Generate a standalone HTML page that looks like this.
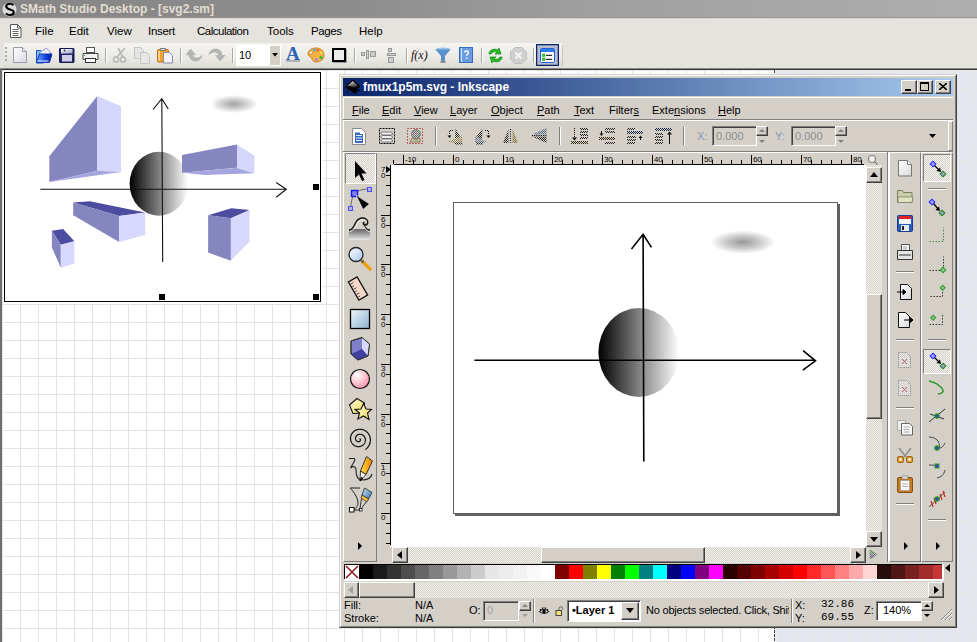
<!DOCTYPE html>
<html><head><meta charset="utf-8">
<style>
*{margin:0;padding:0;box-sizing:border-box}
html,body{width:977px;height:642px;overflow:hidden;background:#fff;font-family:"Liberation Sans",sans-serif;font-size:12px;color:#000}
.a{position:absolute}
.t{position:absolute;white-space:pre;line-height:1}
</style></head><body>
<!-- SMath title bar -->
<div class="a" style="left:0;top:0;width:977px;height:18px;background:linear-gradient(90deg,#868686 0%,#8c8c8c 35%,#a0a0a0 62%,#aeaeae 100%)"></div>
<div class="a" style="left:0;top:17px;width:977px;height:1px;background:#959595"></div>
<div class="t" style="left:20px;top:3px;font-size:12px;font-weight:bold;color:#e2ddd2">SMath Studio Desktop - [svg2.sm]</div>
<!-- menu bar -->
<div class="a" style="left:0;top:18px;width:977px;height:24px;background:#e5e3de"></div>
<div class="a" style="left:0;top:18px;width:977px;height:1px;background:#d8d4cc"></div>
<div class="t" style="left:35px;top:26px;font-size:11.5px">File</div>
<div class="t" style="left:69px;top:26px;font-size:11.5px">Edit</div>
<div class="t" style="left:107px;top:26px;font-size:11.5px">View</div>
<div class="t" style="left:148px;top:26px;font-size:11.5px;letter-spacing:-0.3px">Insert</div>
<div class="t" style="left:197px;top:26px;font-size:11.5px;letter-spacing:-0.5px">Calculation</div>
<div class="t" style="left:267px;top:26px;font-size:11.5px">Tools</div>
<div class="t" style="left:311px;top:26px;font-size:11.5px;letter-spacing:-0.4px">Pages</div>
<div class="t" style="left:359px;top:26px;font-size:11.5px">Help</div>
<!-- toolbar -->
<div class="a" style="left:0;top:42px;width:977px;height:27px;background:#e5e3de"></div>
<div class="a" style="left:4px;top:43px;width:559px;height:25px;border-radius:3px;background:linear-gradient(#f5f4f0,#ebe9e4 60%,#dddbd4)"></div>
<div class="a" style="left:0;top:68px;width:977px;height:1px;background:#858585"></div><div class="a" style="left:0;top:69px;width:977px;height:1px;background:#3c3c3c"></div>

<!-- S icon -->
<svg class="a" style="left:2px;top:1px" width="16" height="16" viewBox="0 0 16 16"><circle cx="7.5" cy="8.5" r="7" fill="#dcdcdc"/><path d="M11.5 4.2C10.6 3.2 9.3 2.8 7.8 2.8 5.6 2.8 4.2 4 4.2 5.6c0 3.6 7.6 2 7.6 5.6 0 1.7-1.6 2.8-3.9 2.8-1.7 0-3.1-.6-4-1.7" fill="none" stroke="#000" stroke-width="2.1"/></svg>
<!-- menu doc icon -->
<svg class="a" style="left:10px;top:24px" width="12" height="14" viewBox="0 0 12 14"><path d="M.5 .5h7l3.5 3.5v9.5h-10.5z" fill="#fff" stroke="#555"/><path d="M7.5 .5v3.5h3.5" fill="none" stroke="#555"/><path d="M2.5 5.5h6M2.5 7.5h6M2.5 9.5h6M2.5 11.5h6" stroke="#666"/></svg>
<!-- grip -->
<div class="a" style="left:5px;top:47px;width:2px;height:2px;background:#a8a8a8"></div>
<div class="a" style="left:5px;top:51px;width:2px;height:2px;background:#a8a8a8"></div>
<div class="a" style="left:5px;top:55px;width:2px;height:2px;background:#a8a8a8"></div>
<div class="a" style="left:5px;top:59px;width:2px;height:2px;background:#a8a8a8"></div>
<!-- new -->
<svg class="a" style="left:13px;top:47px" width="15" height="16" viewBox="0 0 15 16"><defs><linearGradient id="gpg" x1="0" y1="0" x2="1" y2="1"><stop offset="0" stop-color="#fff"/><stop offset="1" stop-color="#d8d8e4"/></linearGradient></defs><path d="M.5 .5h9l4 4v11h-13z" fill="url(#gpg)" stroke="#9a9aa4"/><path d="M9.5 .5v4h4" fill="#e8e8ee" stroke="#9a9aa4"/></svg>
<!-- open -->
<svg class="a" style="left:32px;top:45px" width="44" height="20" viewBox="32 45 44 20"><defs><linearGradient id="fdf" x1="0" y1="0" x2="1" y2="0"><stop offset="0" stop-color="#6aa8f8"/><stop offset=".6" stop-color="#1040d8"/><stop offset="1" stop-color="#001a90"/></linearGradient><linearGradient id="svf" x1="0" y1="0" x2="1" y2="1"><stop offset="0" stop-color="#fff"/><stop offset="1" stop-color="#9aa0c8"/></linearGradient></defs>
<path d="M36.5 50.5h4l1 1.5h2v11h-7z" fill="#7ac0f8" stroke="#1a50d0"/>
<path d="M39 53L46.5 48 51 53 44 57z" fill="#f0f0fa" stroke="#6070c8" stroke-width=".7"/>
<path d="M36.5 62.5L39.5 54H52L49.5 62.5z" fill="url(#fdf)" stroke="#0a30b8" stroke-width=".9"/>
<path d="M37.5 61h11" stroke="#e8f0ff" stroke-width="1"/>
<rect x="59.5" y="48.5" width="14.5" height="14" rx=".5" fill="#24286a" stroke="#14184a"/>
<rect x="61" y="49" width="11.5" height="4.5" fill="url(#svf)"/>
<circle cx="64.5" cy="50.5" r=".9" fill="#24286a"/>
<rect x="62" y="55" width="10" height="6.5" fill="#cfcfe6"/>
</svg>
<!-- print -->
<svg class="a" style="left:82px;top:47px" width="17" height="16" viewBox="0 0 17 16"><rect x="4.5" y=".5" width="8" height="5" fill="#fff" stroke="#555"/><path d="M1 6.5h15v6h-15z" fill="#f0f0f0" stroke="#444"/><rect x="3.5" y="11.5" width="10" height="4" fill="#fff" stroke="#333"/><rect x="2" y="8" width="1" height="1" fill="#2a2"/></svg>
<!-- seps -->
<div class="a" style="left:105px;top:48px;width:1px;height:15px;background:#a8a8a0;box-shadow:1px 0 #fff"></div>
<div class="a" style="left:180px;top:48px;width:1px;height:15px;background:#a8a8a0;box-shadow:1px 0 #fff"></div>
<div class="a" style="left:232px;top:48px;width:1px;height:15px;background:#a8a8a0;box-shadow:1px 0 #fff"></div>
<div class="a" style="left:354px;top:48px;width:1px;height:15px;background:#a8a8a0;box-shadow:1px 0 #fff"></div>
<div class="a" style="left:406px;top:48px;width:1px;height:15px;background:#a8a8a0;box-shadow:1px 0 #fff"></div>
<div class="a" style="left:481px;top:48px;width:1px;height:15px;background:#a8a8a0;box-shadow:1px 0 #fff"></div>
<div class="a" style="left:533px;top:48px;width:1px;height:15px;background:#a8a8a0;box-shadow:1px 0 #fff"></div>
<!-- cut -->
<svg class="a" style="left:112px;top:47px" width="15" height="16" viewBox="0 0 15 16"><path d="M13 1L5 10M6 1l5 9" stroke="#b8b8b8" stroke-width="1.6" fill="none"/><circle cx="4" cy="12.5" r="2.6" fill="none" stroke="#b4b4b4" stroke-width="1.5"/><circle cx="11" cy="12.5" r="2.6" fill="none" stroke="#b4b4b4" stroke-width="1.5"/></svg>
<!-- copy -->
<svg class="a" style="left:134px;top:47px" width="17" height="17" viewBox="0 0 17 17"><path d="M.5 .5h6l3 3v8h-9z" fill="#e6e6e6" stroke="#c4c4c4"/><path d="M6.5 5.5h6l3 3v8h-9z" fill="#e6e6e6" stroke="#c4c4c4"/></svg>
<!-- paste -->
<svg class="a" style="left:157px;top:47px" width="17" height="17" viewBox="0 0 17 17"><rect x=".5" y="2.5" width="11" height="12.5" rx="1" fill="#f0a020" stroke="#c06a10"/><rect x="1.5" y="4" width="1" height="10" fill="#fff"/><path d="M3.5 3.5v-2h5v2z" fill="#ddd" stroke="#777"/><path d="M6.5 5.5h6l3 3v7.5h-9z" fill="#f4f4fc" stroke="#8888a8"/></svg>
<!-- undo -->
<svg class="a" style="left:182px;top:44px" width="48" height="22" viewBox="182 44 48 22"><path d="M190.6 48.9L186 54.8H189C189 58 191.5 61 195.5 61 199 61 201.5 58.5 202 55.5 200.5 57.5 198.5 58 196.5 58 194 58 192.5 56.5 192.5 54.8H195.4Z" fill="#b4b4b4" stroke="#a4a4a4" stroke-width=".5"/><path d="M209 54.5C209.5 51 212.5 49 216 49 219.5 49 222 51.5 222 55.5H225L220 61 215.5 55.5H218.5C218.5 53.5 217 52 215 52 212.5 52 210.5 53 209 54.5Z" fill="#b4b4b4" stroke="#a4a4a4" stroke-width=".5"/></svg>
<!-- combobox -->
<div class="a" style="left:236px;top:45px;width:45px;height:21px;background:#fff"></div>
<div class="a" style="left:270px;top:46px;width:10px;height:19px;background:#d4d0c8"></div>
<svg class="a" style="left:272px;top:53px" width="6" height="4"><path d="M0 0h6l-3 3.5z" fill="#000"/></svg>
<div class="t" style="left:239px;top:50px;font-size:11px;color:#000">10</div>
<!-- A -->
<div class="t" style="left:286px;top:44px;font-family:'Liberation Serif',serif;font-size:19px;font-weight:bold;color:#2a62b8">A</div>
<div class="a" style="left:286px;top:60px;width:14px;height:2px;background:#b0b0b0"></div>
<!-- palette -->
<svg class="a" style="left:307px;top:47px" width="18" height="16" viewBox="0 0 18 16"><path d="M9 1C4 1 1 4 1 7c0 2 2 2 3 3s1 5 5 5c5 0 8-3 8-7S14 1 9 1z" fill="#f4b040" stroke="#d08020"/><circle cx="4" cy="5.5" r="1.5" fill="#fff" stroke="#c07020" stroke-width=".6"/><circle cx="7.5" cy="3" r="1.3" fill="#40a0f0"/><circle cx="11" cy="3.2" r="1.3" fill="#f06030"/><circle cx="14" cy="6" r="1.3" fill="#f0e040"/><circle cx="14" cy="10.5" r="1.6" fill="#30c030"/><circle cx="9.5" cy="12.5" r="1.5" fill="#b080e0"/></svg>
<!-- box -->
<div class="a" style="left:332px;top:48px;width:14px;height:14px;border:2px solid #000;background:#ececec;box-shadow:1px 1px 0 #a0a0a0"></div>
<!-- align -->
<svg class="a" style="left:361px;top:50px" width="15" height="9" viewBox="0 0 15 9"><rect x=".5" y="2.5" width="3" height="3" fill="#ccc" stroke="#999"/><rect x="5.5" y=".5" width="2" height="8" fill="#ccc" stroke="#999"/><rect x="9.5" y="1.5" width="5" height="5" fill="#ccc" stroke="#999"/></svg>
<svg class="a" style="left:387px;top:48px" width="9" height="15" viewBox="0 0 9 15"><rect x="1.5" y=".5" width="3" height="3" fill="#ccc" stroke="#999"/><rect x=".5" y="5.5" width="8" height="2" fill="#ccc" stroke="#999"/><rect x="1.5" y="9.5" width="5" height="5" fill="#ccc" stroke="#999"/></svg>
<!-- f(x) -->
<div class="t" style="left:411px;top:49px;font-family:'Liberation Serif',serif;font-style:italic;font-size:12px;color:#111">f(x)</div>
<!-- funnel -->
<svg class="a" style="left:435px;top:47px" width="17" height="16" viewBox="0 0 17 16"><ellipse cx="8" cy="2.5" rx="7.5" ry="2" fill="#9ac0ec"/><path d="M.5 2.5h15L10 9v5.5H6V9z" fill="#5a90d0"/><ellipse cx="8" cy="15" rx="3" ry="1" fill="#888"/></svg>
<!-- help -->
<svg class="a" style="left:459px;top:47px" width="14" height="16" viewBox="0 0 14 16"><rect x=".5" y=".5" width="13" height="15" fill="#6a9ce0" stroke="#3a6ac0"/><path d="M2.5 1v14" stroke="#d8e8ff"/><path d="M5.5 5.5c0-2 4-2 4 0 0 1.5-2 1.5-2 3.5" fill="none" stroke="#fff" stroke-width="1.3"/><rect x="7" y="10.5" width="1.4" height="1.4" fill="#fff"/></svg>
<!-- refresh -->
<svg class="a" style="left:487px;top:47px" width="17" height="17" viewBox="0 0 17 17"><path d="M2 7c0-4 5-6 9-4l1-2 2 6-6 0 2-2c-3-1-5 0-6 2z" fill="#22bb22" stroke="#118811" stroke-width=".7"/><path d="M15 10c0 4-5 6-9 4l-1 2-2-6 6 0-2 2c3 1 5 0 6-2z" fill="#22bb22" stroke="#118811" stroke-width=".7"/></svg>
<!-- stop -->
<svg class="a" style="left:510px;top:47px" width="17" height="17" viewBox="0 0 17 17"><path d="M5 .5h7l4.5 4.5v7L12 16.5H5L.5 12V5z" fill="#cfcfcf" stroke="#bdbdbd"/><path d="M5.5 5.5l6 6M11.5 5.5l-6 6" stroke="#f4f4f4" stroke-width="2.2"/></svg>
<!-- selected button -->
<div class="a" style="left:536px;top:44px;width:23px;height:22px;border:1px solid #0a246a;background:#b6bdd2;box-shadow:inset 0 0 0 1px #8890b0"></div>
<svg class="a" style="left:540px;top:48px" width="15" height="15" viewBox="0 0 15 15"><rect x=".5" y=".5" width="14" height="14" rx="1" fill="#fff" stroke="#2060d0"/><rect x="1" y="1" width="13" height="3" fill="#2a7ae8"/><rect x="2.5" y="6" width="2.5" height="2.5" fill="#3c3" stroke="#191" stroke-width=".5"/><rect x="2.5" y="10" width="2.5" height="2.5" fill="#3c3" stroke="#191" stroke-width=".5"/><path d="M6 7.3h6M6 11.3h6" stroke="#333" stroke-width="1.2"/></svg>
<div class="a" style="left:562px;top:45px;width:1px;height:21px;background:#c8c6c0"></div>

<!-- grid area -->
<div class="a" style="left:0;top:70px;width:977px;height:572px;background-color:#fff;background-image:linear-gradient(90deg,#e3e3e3 1px,transparent 1px),linear-gradient(#e3e3e3 1px,transparent 1px);background-size:18px 18px;background-position:2px 0"></div>
<div class="a" style="left:775px;top:70px;width:202px;height:572px;background-color:#e4e7f0;background-image:linear-gradient(90deg,#e8e7e6 1px,transparent 1px),linear-gradient(#e8e7e6 1px,transparent 1px);background-size:18px 18px;background-position:-773px 0"></div>
<div class="a" style="left:0;top:69px;width:2px;height:573px;background:#6e6e6e"></div>
<div class="a" style="left:774px;top:70px;width:1px;height:572px;background-image:linear-gradient(#404040 3px,transparent 3px);background-size:1px 4px;background-position:0 0"></div>
<div class="a" style="left:775px;top:70px;width:2px;height:572px;background:#ebebeb"></div>
<!-- svg box -->
<div class="a" style="left:3px;top:71px;width:320px;height:233px;background:#fff"></div>
<div class="a" style="left:4px;top:72px;width:317px;height:230px;border:1px solid #000;background:#fff"></div>

<svg class="a" style="left:0;top:0" width="330" height="310" viewBox="0 0 330 310">
<defs>
<linearGradient id="sph1" x1="0" y1="0" x2="1" y2="0"><stop offset="0" stop-color="#000"/><stop offset="1" stop-color="#fff"/></linearGradient>
<radialGradient id="blur1"><stop offset="0" stop-color="#a2a2a2"/><stop offset=".5" stop-color="#cecece"/><stop offset="1" stop-color="#fff"/></radialGradient>
</defs>
<ellipse cx="234" cy="104" rx="24" ry="9" fill="url(#blur1)"/>
<ellipse cx="158.9" cy="183.7" rx="29.3" ry="32" fill="url(#sph1)"/>
<polygon points="49.3,156.3 97.3,95.9 97.3,170.7 49.3,181.9" fill="#8585c0"/>
<polygon points="97.3,95.9 121,106.2 121,172.1 97.3,170.7" fill="#d6d6fc"/>
<polygon points="49.3,181.9 97.3,170.7 121,172.1" fill="#a6a6de"/>
<polygon points="182,154.9 237,144.4 237,167.8 182,172.7" fill="#8585c0"/>
<polygon points="182,172.7 237,167.8 254.4,173.3 204.7,175.1" fill="#a6a6de"/>
<polygon points="237,144.4 254.4,155.8 254.4,173.3 237,167.8" fill="#d6d6fc"/>
<polygon points="73.2,202.6 89.8,201.2 145.2,212.4 119.2,215.9" fill="#4c4ca0"/>
<polygon points="73.2,202.6 119.2,215.9 119.2,241.9 73.2,215.2" fill="#8585c0"/>
<polygon points="119.2,215.9 145.2,212.4 145.2,234.9 119.2,241.9" fill="#d8d8fc"/>
<polygon points="51.9,230.7 63.1,229 74.4,241.2 60.8,244.7" fill="#4c4ca0"/>
<polygon points="51.9,230.7 60.8,244.7 60.8,267.8 51.9,247.5" fill="#8585c0"/>
<polygon points="60.8,244.7 74.4,241.2 74.4,263.6 60.8,267.8" fill="#d8d8fc"/>
<polygon points="208.1,215.2 231.4,208.3 249.6,210.1 230.9,218.2" fill="#4c4ca0"/>
<polygon points="208.1,215.2 230.9,218.2 230.9,260.7 208.1,252.6" fill="#8585c0"/>
<polygon points="230.9,218.2 249.6,210.1 249.6,241.5 230.9,260.7" fill="#d8d8fc"/>
<path d="M40.3 189.3H286.3M276.2 182.5L286.3 189.3 276.2 197.2" fill="none" stroke="#111" stroke-width="1.1"/>
<path d="M161.8 98.7L162.7 262M153 109.5L161.8 98.7 168.3 109" fill="none" stroke="#111" stroke-width="1.1"/>
<rect x="313" y="184" width="6" height="6" fill="#000"/>
<rect x="159" y="294" width="6" height="6" fill="#000"/>
<rect x="313" y="294" width="6" height="6" fill="#000"/>
</svg>

<!-- Inkscape window -->
<div class="a" style="left:339px;top:74px;width:618px;height:554px;background:#d4d0c8;border-top:1px solid #d4d0c8;border-left:1px solid #d4d0c8;border-right:1px solid #404040;border-bottom:1px solid #404040"></div>
<div class="a" style="left:340px;top:75px;width:616px;height:552px;border-top:1px solid #fff;border-left:1px solid #fff;border-right:1px solid #808080;border-bottom:1px solid #808080"></div>
<div class="a" style="left:343px;top:78px;width:610px;height:18px;background:linear-gradient(90deg,#0a246a,#a6caf0)"></div>
<svg class="a" style="left:344px;top:78px" width="18" height="18" viewBox="344 78 18 18"><defs><linearGradient id="inkg" x1="0" y1="0" x2=".6" y2="1"><stop offset="0" stop-color="#fff"/><stop offset="1" stop-color="#222"/></linearGradient></defs><path d="M352.7 79.5L360.3 86.5 357 89 358 91 355 94 352.5 92 350 90.5 348 89.5 345.3 86.5z" fill="#000"/><path d="M352.7 81L358.5 86.2 354 87.5 350 86 347 86.2z" fill="url(#inkg)"/><rect x="347" y="92" width="1.5" height="1" fill="#000"/><rect x="358.5" y="90" width="1.5" height="1" fill="#000"/></svg>
<div class="t" style="left:363px;top:81px;font-size:12px;font-weight:bold;color:#fff">fmux1p5m.svg - Inkscape</div>
<div class="a" style="left:901px;top:80px;width:16px;height:14px;background:#d4d0c8;border-top:1px solid #fff;border-left:1px solid #fff;border-right:1px solid #404040;border-bottom:1px solid #404040;box-shadow:inset -1px -1px #808080"></div>
<div class="a" style="left:917px;top:80px;width:16px;height:14px;background:#d4d0c8;border-top:1px solid #fff;border-left:1px solid #fff;border-right:1px solid #404040;border-bottom:1px solid #404040;box-shadow:inset -1px -1px #808080"></div>
<div class="a" style="left:935px;top:80px;width:16px;height:14px;background:#d4d0c8;border-top:1px solid #fff;border-left:1px solid #fff;border-right:1px solid #404040;border-bottom:1px solid #404040;box-shadow:inset -1px -1px #808080"></div>
<div class="a" style="left:905px;top:89px;width:6px;height:2px;background:#000"></div>
<div class="a" style="left:920px;top:82px;width:9px;height:9px;border:1px solid #000;border-top-width:2px"></div>
<svg class="a" style="left:939px;top:83px" width="8" height="7" viewBox="0 0 8 7"><path d="M0 0L8 7M8 0L0 7" stroke="#000" stroke-width="1.6"/></svg>
<div class="t" style="left:352px;top:105px;font-size:11px;text-underline-offset:1px"><u>F</u>ile</div>
<div class="t" style="left:382px;top:105px;font-size:11px;text-underline-offset:1px"><u>E</u>dit</div>
<div class="t" style="left:414px;top:105px;font-size:11px;text-underline-offset:1px"><u>V</u>iew</div>
<div class="t" style="left:450px;top:105px;font-size:11px;text-underline-offset:1px"><u>L</u>ayer</div>
<div class="t" style="left:491px;top:105px;font-size:11px;text-underline-offset:1px"><u>O</u>bject</div>
<div class="t" style="left:537px;top:105px;font-size:11px;text-underline-offset:1px"><u>P</u>ath</div>
<div class="t" style="left:574px;top:105px;font-size:11px;text-underline-offset:1px"><u>T</u>ext</div>
<div class="t" style="left:609px;top:105px;font-size:11px;text-underline-offset:1px">Filter<u>s</u></div>
<div class="t" style="left:652px;top:105px;font-size:11px;text-underline-offset:1px">Exte<u>n</u>sions</div>
<div class="t" style="left:718px;top:105px;font-size:11px;text-underline-offset:1px"><u>H</u>elp</div>
<div class="a" style="left:343px;top:97px;width:610px;height:22px;border-left:1px solid #fff;border-top:1px solid #fff"></div>
<div class="a" style="left:343px;top:119px;width:610px;height:1px;background:#808080"></div>
<div class="a" style="left:343px;top:120px;width:610px;height:1px;background:#fff"></div>
<div class="a" style="left:343px;top:151px;width:610px;height:1px;background:#808080"></div>
<div class="a" style="left:343px;top:152px;width:610px;height:1px;background:#fff"></div>
<div class="a" style="left:343px;top:120px;width:1px;height:31px;background:#fff"></div>
<div class="a" style="left:435px;top:127px;width:1px;height:18px;background:#808080;box-shadow:1px 0 #fff"></div>
<div class="a" style="left:559px;top:127px;width:1px;height:18px;background:#808080;box-shadow:1px 0 #fff"></div>
<div class="a" style="left:683px;top:127px;width:1px;height:18px;background:#808080;box-shadow:1px 0 #fff"></div>
<div class="t" style="left:697px;top:131px;font-size:11px;color:#8594b8">X:</div>
<div class="a" style="left:712px;top:126px;width:45px;height:20px;background:#d4d0c8;border-top:1px solid #808080;border-left:1px solid #808080;border-right:1px solid #fff;border-bottom:1px solid #fff;box-shadow:inset 1px 1px #404040"></div>
<div class="t" style="left:716px;top:131px;font-size:11px;color:#8c8c8c">0.000</div>
<div class="a" style="left:756px;top:126px;width:12px;height:10px;background:#d4d0c8;border-top:1px solid #fff;border-left:1px solid #fff;border-right:1px solid #404040;border-bottom:1px solid #404040;box-shadow:inset -1px -1px #808080"></div>
<svg class="a" style="left:759px;top:129px" width="6" height="4"><path d="M0 3h6L3 0z" fill="#808080"/></svg><svg class="a" style="left:759px;top:140px" width="6" height="4"><path d="M0 0h6L3 3z" fill="#808080"/></svg>
<div class="t" style="left:775px;top:131px;font-size:11px;color:#8594b8">Y:</div>
<div class="a" style="left:791px;top:126px;width:45px;height:20px;background:#d4d0c8;border-top:1px solid #808080;border-left:1px solid #808080;border-right:1px solid #fff;border-bottom:1px solid #fff;box-shadow:inset 1px 1px #404040"></div>
<div class="t" style="left:795px;top:131px;font-size:11px;color:#8c8c8c">0.000</div>
<div class="a" style="left:835px;top:126px;width:12px;height:10px;background:#d4d0c8;border-top:1px solid #fff;border-left:1px solid #fff;border-right:1px solid #404040;border-bottom:1px solid #404040;box-shadow:inset -1px -1px #808080"></div>
<svg class="a" style="left:838px;top:129px" width="6" height="4"><path d="M0 3h6L3 0z" fill="#808080"/></svg><svg class="a" style="left:838px;top:140px" width="6" height="4"><path d="M0 0h6L3 3z" fill="#808080"/></svg>
<svg class="a" style="left:929px;top:134px" width="8" height="4"><path d="M0 0h7l-3.5 4z" fill="#000"/></svg>
<div class="a" style="left:948px;top:121px;width:5px;height:30px;border-left:1px solid #fff;border-top:1px solid #fff;border-right:1px solid #808080;border-bottom:1px solid #808080"></div>
<div class="a" style="left:343px;top:153px;width:34px;height:409px;border-left:1px solid #fff;border-bottom:1px solid #808080"></div>
<div class="a" style="left:376px;top:153px;width:1px;height:409px;background:#808080"></div>
<div class="a" style="left:345px;top:153px;width:31px;height:31px;background-color:#f4f3f0;background-image:linear-gradient(45deg,#d4d0c8 25%,transparent 25%,transparent 75%,#d4d0c8 75%),linear-gradient(45deg,#d4d0c8 25%,transparent 25%,transparent 75%,#d4d0c8 75%);background-size:2px 2px;background-position:0 0,1px 1px;border-top:1px solid #808080;border-left:1px solid #808080;border-right:1px solid #fff;border-bottom:1px solid #fff"></div>
<div class="a" style="left:377px;top:153px;width:510px;height:12px;background:#d4d0c8"></div>
<div class="a" style="left:394px;top:164px;width:470px;height:1px;background:#000"></div>
<div class="a" style="left:390px;top:165px;width:1px;height:380px;background:#000"></div>
<div class="a" style="left:393px;top:160px;width:1px;height:4px;background:#000"></div>
<div class="a" style="left:403px;top:155px;width:1px;height:9px;background:#000"></div>
<div class="a" style="left:413px;top:160px;width:1px;height:4px;background:#000"></div>
<div class="a" style="left:423px;top:160px;width:1px;height:4px;background:#000"></div>
<div class="a" style="left:433px;top:160px;width:1px;height:4px;background:#000"></div>
<div class="a" style="left:443px;top:160px;width:1px;height:4px;background:#000"></div>
<div class="a" style="left:453px;top:155px;width:1px;height:9px;background:#000"></div>
<div class="a" style="left:463px;top:160px;width:1px;height:4px;background:#000"></div>
<div class="a" style="left:473px;top:160px;width:1px;height:4px;background:#000"></div>
<div class="a" style="left:483px;top:160px;width:1px;height:4px;background:#000"></div>
<div class="a" style="left:493px;top:160px;width:1px;height:4px;background:#000"></div>
<div class="a" style="left:503px;top:155px;width:1px;height:9px;background:#000"></div>
<div class="a" style="left:513px;top:160px;width:1px;height:4px;background:#000"></div>
<div class="a" style="left:523px;top:160px;width:1px;height:4px;background:#000"></div>
<div class="a" style="left:533px;top:160px;width:1px;height:4px;background:#000"></div>
<div class="a" style="left:543px;top:160px;width:1px;height:4px;background:#000"></div>
<div class="a" style="left:552px;top:155px;width:1px;height:9px;background:#000"></div>
<div class="a" style="left:562px;top:160px;width:1px;height:4px;background:#000"></div>
<div class="a" style="left:572px;top:160px;width:1px;height:4px;background:#000"></div>
<div class="a" style="left:582px;top:160px;width:1px;height:4px;background:#000"></div>
<div class="a" style="left:592px;top:160px;width:1px;height:4px;background:#000"></div>
<div class="a" style="left:602px;top:155px;width:1px;height:9px;background:#000"></div>
<div class="a" style="left:612px;top:160px;width:1px;height:4px;background:#000"></div>
<div class="a" style="left:622px;top:160px;width:1px;height:4px;background:#000"></div>
<div class="a" style="left:632px;top:160px;width:1px;height:4px;background:#000"></div>
<div class="a" style="left:642px;top:160px;width:1px;height:4px;background:#000"></div>
<div class="a" style="left:652px;top:155px;width:1px;height:9px;background:#000"></div>
<div class="a" style="left:662px;top:160px;width:1px;height:4px;background:#000"></div>
<div class="a" style="left:672px;top:160px;width:1px;height:4px;background:#000"></div>
<div class="a" style="left:682px;top:160px;width:1px;height:4px;background:#000"></div>
<div class="a" style="left:692px;top:160px;width:1px;height:4px;background:#000"></div>
<div class="a" style="left:702px;top:155px;width:1px;height:9px;background:#000"></div>
<div class="a" style="left:712px;top:160px;width:1px;height:4px;background:#000"></div>
<div class="a" style="left:721px;top:160px;width:1px;height:4px;background:#000"></div>
<div class="a" style="left:731px;top:160px;width:1px;height:4px;background:#000"></div>
<div class="a" style="left:741px;top:160px;width:1px;height:4px;background:#000"></div>
<div class="a" style="left:751px;top:155px;width:1px;height:9px;background:#000"></div>
<div class="a" style="left:761px;top:160px;width:1px;height:4px;background:#000"></div>
<div class="a" style="left:771px;top:160px;width:1px;height:4px;background:#000"></div>
<div class="a" style="left:781px;top:160px;width:1px;height:4px;background:#000"></div>
<div class="a" style="left:791px;top:160px;width:1px;height:4px;background:#000"></div>
<div class="a" style="left:801px;top:155px;width:1px;height:9px;background:#000"></div>
<div class="a" style="left:811px;top:160px;width:1px;height:4px;background:#000"></div>
<div class="a" style="left:821px;top:160px;width:1px;height:4px;background:#000"></div>
<div class="a" style="left:831px;top:160px;width:1px;height:4px;background:#000"></div>
<div class="a" style="left:841px;top:160px;width:1px;height:4px;background:#000"></div>
<div class="a" style="left:851px;top:155px;width:1px;height:9px;background:#000"></div>
<div class="a" style="left:861px;top:160px;width:1px;height:4px;background:#000"></div>
<div class="t" style="left:405px;top:156px;font-size:8px;color:#000;letter-spacing:-0.2px">-10</div>
<div class="t" style="left:455px;top:156px;font-size:8px;color:#000;letter-spacing:-0.2px">0</div>
<div class="t" style="left:505px;top:156px;font-size:8px;color:#000;letter-spacing:-0.2px">10</div>
<div class="t" style="left:554px;top:156px;font-size:8px;color:#000;letter-spacing:-0.2px">20</div>
<div class="t" style="left:604px;top:156px;font-size:8px;color:#000;letter-spacing:-0.2px">30</div>
<div class="t" style="left:654px;top:156px;font-size:8px;color:#000;letter-spacing:-0.2px">40</div>
<div class="t" style="left:704px;top:156px;font-size:8px;color:#000;letter-spacing:-0.2px">50</div>
<div class="t" style="left:753px;top:156px;font-size:8px;color:#000;letter-spacing:-0.2px">60</div>
<div class="t" style="left:803px;top:156px;font-size:8px;color:#000;letter-spacing:-0.2px">70</div>
<div class="t" style="left:853px;top:156px;font-size:8px;color:#000;letter-spacing:-0.2px">80</div>
<div class="a" style="left:386px;top:175px;width:4px;height:1px;background:#000"></div>
<div class="a" style="left:386px;top:185px;width:4px;height:1px;background:#000"></div>
<div class="a" style="left:386px;top:195px;width:4px;height:1px;background:#000"></div>
<div class="a" style="left:386px;top:205px;width:4px;height:1px;background:#000"></div>
<div class="a" style="left:381px;top:215px;width:9px;height:1px;background:#000"></div>
<div class="a" style="left:386px;top:225px;width:4px;height:1px;background:#000"></div>
<div class="a" style="left:386px;top:235px;width:4px;height:1px;background:#000"></div>
<div class="a" style="left:386px;top:245px;width:4px;height:1px;background:#000"></div>
<div class="a" style="left:386px;top:255px;width:4px;height:1px;background:#000"></div>
<div class="a" style="left:381px;top:264px;width:9px;height:1px;background:#000"></div>
<div class="a" style="left:386px;top:274px;width:4px;height:1px;background:#000"></div>
<div class="a" style="left:386px;top:284px;width:4px;height:1px;background:#000"></div>
<div class="a" style="left:386px;top:294px;width:4px;height:1px;background:#000"></div>
<div class="a" style="left:386px;top:304px;width:4px;height:1px;background:#000"></div>
<div class="a" style="left:381px;top:314px;width:9px;height:1px;background:#000"></div>
<div class="a" style="left:386px;top:324px;width:4px;height:1px;background:#000"></div>
<div class="a" style="left:386px;top:334px;width:4px;height:1px;background:#000"></div>
<div class="a" style="left:386px;top:344px;width:4px;height:1px;background:#000"></div>
<div class="a" style="left:386px;top:354px;width:4px;height:1px;background:#000"></div>
<div class="a" style="left:381px;top:364px;width:9px;height:1px;background:#000"></div>
<div class="a" style="left:386px;top:374px;width:4px;height:1px;background:#000"></div>
<div class="a" style="left:386px;top:384px;width:4px;height:1px;background:#000"></div>
<div class="a" style="left:386px;top:394px;width:4px;height:1px;background:#000"></div>
<div class="a" style="left:386px;top:404px;width:4px;height:1px;background:#000"></div>
<div class="a" style="left:381px;top:414px;width:9px;height:1px;background:#000"></div>
<div class="a" style="left:386px;top:424px;width:4px;height:1px;background:#000"></div>
<div class="a" style="left:386px;top:433px;width:4px;height:1px;background:#000"></div>
<div class="a" style="left:386px;top:443px;width:4px;height:1px;background:#000"></div>
<div class="a" style="left:386px;top:453px;width:4px;height:1px;background:#000"></div>
<div class="a" style="left:381px;top:463px;width:9px;height:1px;background:#000"></div>
<div class="a" style="left:386px;top:473px;width:4px;height:1px;background:#000"></div>
<div class="a" style="left:386px;top:483px;width:4px;height:1px;background:#000"></div>
<div class="a" style="left:386px;top:493px;width:4px;height:1px;background:#000"></div>
<div class="a" style="left:386px;top:503px;width:4px;height:1px;background:#000"></div>
<div class="a" style="left:381px;top:513px;width:9px;height:1px;background:#000"></div>
<div class="a" style="left:386px;top:523px;width:4px;height:1px;background:#000"></div>
<div class="a" style="left:386px;top:533px;width:4px;height:1px;background:#000"></div>
<div class="a" style="left:386px;top:543px;width:4px;height:1px;background:#000"></div>
<div class="t" style="left:381px;top:167px;font-size:8px;line-height:6px">7</div>
<div class="t" style="left:381px;top:173px;font-size:8px;line-height:6px">0</div>
<div class="t" style="left:381px;top:217px;font-size:8px;line-height:6px">6</div>
<div class="t" style="left:381px;top:223px;font-size:8px;line-height:6px">0</div>
<div class="t" style="left:381px;top:266px;font-size:8px;line-height:6px">5</div>
<div class="t" style="left:381px;top:272px;font-size:8px;line-height:6px">0</div>
<div class="t" style="left:381px;top:316px;font-size:8px;line-height:6px">4</div>
<div class="t" style="left:381px;top:322px;font-size:8px;line-height:6px">0</div>
<div class="t" style="left:381px;top:366px;font-size:8px;line-height:6px">3</div>
<div class="t" style="left:381px;top:372px;font-size:8px;line-height:6px">0</div>
<div class="t" style="left:381px;top:416px;font-size:8px;line-height:6px">2</div>
<div class="t" style="left:381px;top:422px;font-size:8px;line-height:6px">0</div>
<div class="t" style="left:381px;top:465px;font-size:8px;line-height:6px">1</div>
<div class="t" style="left:381px;top:471px;font-size:8px;line-height:6px">0</div>
<div class="t" style="left:381px;top:515px;font-size:8px;line-height:6px">0</div>
<svg class="a" style="left:386px;top:166px" width="5" height="7"><path d="M0 0L5 3.5 0 7z" fill="#000"/></svg>
<div class="a" style="left:391px;top:165px;width:475px;height:382px;background:#fff"></div>
<svg class="a" style="left:391px;top:165px" width="475" height="382" viewBox="391 165 475 382">
<defs>
<linearGradient id="sph2" x1="0" y1="0" x2="1" y2="0"><stop offset="0" stop-color="#000"/><stop offset="1" stop-color="#fff"/></linearGradient>
<radialGradient id="blur2"><stop offset="0" stop-color="#999"/><stop offset=".5" stop-color="#c8c8c8"/><stop offset="1" stop-color="#fff"/></radialGradient>
</defs>
<rect x="455" y="204" width="385" height="312" fill="#606060"/>
<rect x="453.5" y="202.5" width="384" height="311" fill="#fff" stroke="#606060" stroke-width="1"/>
<ellipse cx="742.9" cy="242.2" rx="32.6" ry="11.8" fill="url(#blur2)"/>
<ellipse cx="638.8" cy="352.5" rx="40.4" ry="44.5" fill="url(#sph2)"/>
<path d="M474.4 360.2H815M803.1 350.6L815.5 360.8 802.8 370.2" fill="none" stroke="#000" stroke-width="1.6"/>
<path d="M643.1 235L643.8 461.4M631.5 249L643.1 234.3 651.5 247.4" fill="none" stroke="#000" stroke-width="1.6"/>
</svg>
<div class="a" style="left:866px;top:165px;width:16px;height:382px;background-color:#f4f3f0;background-image:linear-gradient(45deg,#d4d0c8 25%,transparent 25%,transparent 75%,#d4d0c8 75%),linear-gradient(45deg,#d4d0c8 25%,transparent 25%,transparent 75%,#d4d0c8 75%);background-size:2px 2px;background-position:0 0,1px 1px"></div>
<div class="a" style="left:866px;top:167px;width:16px;height:16px;background:#d4d0c8;border-top:1px solid #fff;border-left:1px solid #fff;border-right:1px solid #404040;border-bottom:1px solid #404040;box-shadow:inset -1px -1px #808080"></div>
<svg class="a" style="left:870px;top:172px" width="8" height="5"><path d="M0 5h8L4 0z" fill="#000"/></svg>
<div class="a" style="left:866px;top:294px;width:16px;height:125px;background:#d4d0c8;border-top:1px solid #fff;border-left:1px solid #fff;border-right:1px solid #404040;border-bottom:1px solid #404040;box-shadow:inset -1px -1px #808080"></div>
<div class="a" style="left:866px;top:531px;width:16px;height:16px;background:#d4d0c8;border-top:1px solid #fff;border-left:1px solid #fff;border-right:1px solid #404040;border-bottom:1px solid #404040;box-shadow:inset -1px -1px #808080"></div>
<svg class="a" style="left:870px;top:537px" width="8" height="5"><path d="M0 0h8L4 5z" fill="#000"/></svg>
<div class="a" style="left:407px;top:547px;width:459px;height:16px;background-color:#f4f3f0;background-image:linear-gradient(45deg,#d4d0c8 25%,transparent 25%,transparent 75%,#d4d0c8 75%),linear-gradient(45deg,#d4d0c8 25%,transparent 25%,transparent 75%,#d4d0c8 75%);background-size:2px 2px;background-position:0 0,1px 1px"></div>
<div class="a" style="left:392px;top:547px;width:16px;height:16px;background:#d4d0c8;border-top:1px solid #fff;border-left:1px solid #fff;border-right:1px solid #404040;border-bottom:1px solid #404040;box-shadow:inset -1px -1px #808080"></div>
<svg class="a" style="left:397px;top:551px" width="5" height="8"><path d="M5 0v8L0 4z" fill="#000"/></svg>
<div class="a" style="left:541px;top:547px;width:164px;height:16px;background:#d4d0c8;border-top:1px solid #fff;border-left:1px solid #fff;border-right:1px solid #404040;border-bottom:1px solid #404040;box-shadow:inset -1px -1px #808080"></div>
<div class="a" style="left:850px;top:547px;width:16px;height:16px;background:#d4d0c8;border-top:1px solid #fff;border-left:1px solid #fff;border-right:1px solid #404040;border-bottom:1px solid #404040;box-shadow:inset -1px -1px #808080"></div>
<svg class="a" style="left:856px;top:551px" width="5" height="8"><path d="M0 0v8L5 4z" fill="#000"/></svg>
<div class="a" style="left:887px;top:152px;width:1px;height:410px;background:#808080;box-shadow:1px 0 #fff"></div>
<div class="a" style="left:889px;top:152px;width:32px;height:410px;border-top:1px solid #fff;border-left:1px solid #fff;border-right:1px solid #808080;border-bottom:1px solid #808080"></div>
<div class="a" style="left:921px;top:152px;width:32px;height:410px;border-top:1px solid #fff;border-left:1px solid #fff;border-right:1px solid #808080;border-bottom:1px solid #808080"></div>
<div class="a" style="left:923px;top:154px;width:28px;height:28px;background-color:#f4f3f0;background-image:linear-gradient(45deg,#d4d0c8 25%,transparent 25%,transparent 75%,#d4d0c8 75%),linear-gradient(45deg,#d4d0c8 25%,transparent 25%,transparent 75%,#d4d0c8 75%);background-size:2px 2px;background-position:0 0,1px 1px;border-top:1px solid #808080;border-left:1px solid #808080;border-right:1px solid #fff;border-bottom:1px solid #fff"></div>
<div class="a" style="left:923px;top:349px;width:28px;height:25px;background-color:#f4f3f0;background-image:linear-gradient(45deg,#d4d0c8 25%,transparent 25%,transparent 75%,#d4d0c8 75%),linear-gradient(45deg,#d4d0c8 25%,transparent 25%,transparent 75%,#d4d0c8 75%);background-size:2px 2px;background-position:0 0,1px 1px;border-top:1px solid #808080;border-left:1px solid #808080;border-right:1px solid #fff;border-bottom:1px solid #fff"></div>
<div class="a" style="left:896px;top:271px;width:18px;height:1px;background:#808080;box-shadow:0 1px #fff"></div>
<div class="a" style="left:896px;top:339px;width:18px;height:1px;background:#808080;box-shadow:0 1px #fff"></div>
<div class="a" style="left:896px;top:407px;width:18px;height:1px;background:#808080;box-shadow:0 1px #fff"></div>
<div class="a" style="left:896px;top:503px;width:18px;height:1px;background:#808080;box-shadow:0 1px #fff"></div>
<div class="a" style="left:928px;top:188px;width:18px;height:1px;background:#808080;box-shadow:0 1px #fff"></div>
<div class="a" style="left:928px;top:339px;width:18px;height:1px;background:#808080;box-shadow:0 1px #fff"></div>
<div class="a" style="left:928px;top:519px;width:18px;height:1px;background:#808080;box-shadow:0 1px #fff"></div>
<svg class="a" style="left:904px;top:542px" width="4" height="8"><path d="M0 0v8L4 4z" fill="#000"/></svg>
<svg class="a" style="left:936px;top:542px" width="4" height="8"><path d="M0 0v8L4 4z" fill="#000"/></svg>
<svg class="a" style="left:358px;top:542px" width="4" height="8"><path d="M0 0v8L4 4z" fill="#000"/></svg>
<div class="a" style="left:344px;top:564px;width:599px;height:15px;background:#000"></div>
<div class="a" style="left:344px;top:579px;width:599px;height:2px;background:#fff"></div>
<div class="a" style="left:345px;top:565px;width:14px;height:14px;background:#fff"></div>
<svg class="a" style="left:345px;top:565px" width="14" height="14"><path d="M1 1L13 13M13 1L1 13" stroke="#8b1a1a" stroke-width="1.5"/></svg>
<div class="a" style="left:359px;top:565px;width:14px;height:14px;background:#000000"></div>
<div class="a" style="left:373px;top:565px;width:14px;height:14px;background:#1a1a1a"></div>
<div class="a" style="left:387px;top:565px;width:14px;height:14px;background:#333333"></div>
<div class="a" style="left:401px;top:565px;width:14px;height:14px;background:#4d4d4d"></div>
<div class="a" style="left:415px;top:565px;width:14px;height:14px;background:#666666"></div>
<div class="a" style="left:429px;top:565px;width:14px;height:14px;background:#808080"></div>
<div class="a" style="left:443px;top:565px;width:14px;height:14px;background:#999999"></div>
<div class="a" style="left:457px;top:565px;width:14px;height:14px;background:#b3b3b3"></div>
<div class="a" style="left:471px;top:565px;width:14px;height:14px;background:#cccccc"></div>
<div class="a" style="left:485px;top:565px;width:14px;height:14px;background:#e6e6e6"></div>
<div class="a" style="left:499px;top:565px;width:14px;height:14px;background:#ececec"></div>
<div class="a" style="left:513px;top:565px;width:14px;height:14px;background:#f2f2f2"></div>
<div class="a" style="left:527px;top:565px;width:14px;height:14px;background:#f9f9f9"></div>
<div class="a" style="left:541px;top:565px;width:14px;height:14px;background:#ffffff"></div>
<div class="a" style="left:555px;top:565px;width:14px;height:14px;background:#800000"></div>
<div class="a" style="left:569px;top:565px;width:14px;height:14px;background:#ff0000"></div>
<div class="a" style="left:583px;top:565px;width:14px;height:14px;background:#808000"></div>
<div class="a" style="left:597px;top:565px;width:14px;height:14px;background:#ffff00"></div>
<div class="a" style="left:611px;top:565px;width:14px;height:14px;background:#008000"></div>
<div class="a" style="left:625px;top:565px;width:14px;height:14px;background:#00ff00"></div>
<div class="a" style="left:639px;top:565px;width:14px;height:14px;background:#008080"></div>
<div class="a" style="left:653px;top:565px;width:14px;height:14px;background:#00ffff"></div>
<div class="a" style="left:667px;top:565px;width:14px;height:14px;background:#000080"></div>
<div class="a" style="left:681px;top:565px;width:14px;height:14px;background:#0000ff"></div>
<div class="a" style="left:695px;top:565px;width:14px;height:14px;background:#800080"></div>
<div class="a" style="left:709px;top:565px;width:14px;height:14px;background:#ff00ff"></div>
<div class="a" style="left:723px;top:565px;width:14px;height:14px;background:#2b0000"></div>
<div class="a" style="left:737px;top:565px;width:14px;height:14px;background:#550000"></div>
<div class="a" style="left:751px;top:565px;width:14px;height:14px;background:#800000"></div>
<div class="a" style="left:765px;top:565px;width:14px;height:14px;background:#aa0000"></div>
<div class="a" style="left:779px;top:565px;width:14px;height:14px;background:#d40000"></div>
<div class="a" style="left:793px;top:565px;width:14px;height:14px;background:#ff0000"></div>
<div class="a" style="left:807px;top:565px;width:14px;height:14px;background:#ff2a2a"></div>
<div class="a" style="left:821px;top:565px;width:14px;height:14px;background:#ff5555"></div>
<div class="a" style="left:835px;top:565px;width:14px;height:14px;background:#ff8080"></div>
<div class="a" style="left:849px;top:565px;width:14px;height:14px;background:#ffaaaa"></div>
<div class="a" style="left:863px;top:565px;width:14px;height:14px;background:#ffd5d5"></div>
<div class="a" style="left:877px;top:565px;width:14px;height:14px;background:#280b0b"></div>
<div class="a" style="left:891px;top:565px;width:14px;height:14px;background:#501616"></div>
<div class="a" style="left:905px;top:565px;width:14px;height:14px;background:#782121"></div>
<div class="a" style="left:919px;top:565px;width:14px;height:14px;background:#a02c2c"></div>
<div class="a" style="left:933px;top:565px;width:9px;height:14px;background:#c83737"></div>
<div class="a" style="left:942px;top:563px;width:11px;height:17px;background:#d4d0c8"></div>
<svg class="a" style="left:945px;top:564px" width="5" height="8"><path d="M5 0v8L0 4z" fill="#000"/></svg>
<div class="a" style="left:942px;top:564px;width:2px;height:17px;background:#fff"></div>
<div class="a" style="left:343px;top:582px;width:601px;height:16px;background-color:#f4f3f0;background-image:linear-gradient(45deg,#d4d0c8 25%,transparent 25%,transparent 75%,#d4d0c8 75%),linear-gradient(45deg,#d4d0c8 25%,transparent 25%,transparent 75%,#d4d0c8 75%);background-size:2px 2px;background-position:0 0,1px 1px"></div>
<div class="a" style="left:344px;top:582px;width:15px;height:16px;background:#d4d0c8;border-top:1px solid #fff;border-left:1px solid #fff;border-right:1px solid #404040;border-bottom:1px solid #404040;box-shadow:inset -1px -1px #808080"></div>
<svg class="a" style="left:348px;top:586px" width="5" height="8"><path d="M5 0v8L0 4z" fill="#a0a0a0"/></svg>
<div class="a" style="left:359px;top:582px;width:56px;height:16px;background:#d4d0c8;border-top:1px solid #fff;border-left:1px solid #fff;border-right:1px solid #404040;border-bottom:1px solid #404040;box-shadow:inset -1px -1px #808080"></div>
<div class="a" style="left:928px;top:582px;width:16px;height:16px;background:#d4d0c8;border-top:1px solid #fff;border-left:1px solid #fff;border-right:1px solid #404040;border-bottom:1px solid #404040;box-shadow:inset -1px -1px #808080"></div>
<svg class="a" style="left:934px;top:586px" width="5" height="8"><path d="M0 0v8L5 4z" fill="#000"/></svg>
<div class="t" style="left:344px;top:600px;font-size:11px">Fill:</div>
<div class="t" style="left:344px;top:613px;font-size:11px">Stroke:</div>
<div class="t" style="left:415px;top:600px;font-size:11px">N/A</div>
<div class="t" style="left:415px;top:613px;font-size:11px">N/A</div>
<div class="t" style="left:469px;top:605px;font-size:11px">O:</div>
<div class="a" style="left:483px;top:601px;width:36px;height:20px;background:#d4d0c8;border-top:1px solid #808080;border-left:1px solid #808080;border-right:1px solid #fff;border-bottom:1px solid #fff;box-shadow:inset 1px 1px #404040"></div>
<div class="t" style="left:487px;top:605px;font-size:11px;color:#a0a0a0">0</div>
<div class="a" style="left:519px;top:601px;width:12px;height:10px;background:#d4d0c8;border-top:1px solid #fff;border-left:1px solid #fff;border-right:1px solid #404040;border-bottom:1px solid #404040;box-shadow:inset -1px -1px #808080"></div>
<svg class="a" style="left:522px;top:604px" width="6" height="4"><path d="M0 3h6L3 0z" fill="#808080"/></svg><svg class="a" style="left:522px;top:614px" width="6" height="4"><path d="M0 0h6L3 3z" fill="#a0a0a0"/></svg>
<div class="a" style="left:533px;top:599px;width:1px;height:24px;background:#808080;box-shadow:1px 0 #fff"></div>
<div class="a" style="left:567px;top:600px;width:74px;height:22px;background:#fff;border-top:1px solid #808080;border-left:1px solid #808080;border-right:1px solid #fff;border-bottom:1px solid #fff;box-shadow:inset 1px 1px #404040"></div>
<div class="t" style="left:572px;top:605px;font-size:11px;font-weight:bold">•Layer 1</div>
<div class="a" style="left:621px;top:602px;width:18px;height:18px;background:#d4d0c8;border-top:1px solid #fff;border-left:1px solid #fff;border-right:1px solid #404040;border-bottom:1px solid #404040;box-shadow:inset -1px -1px #808080"></div>
<svg class="a" style="left:626px;top:608px" width="8" height="5"><path d="M0 0h8L4 5z" fill="#000"/></svg>
<div class="a" style="left:646px;top:603px;width:143px;height:16px;overflow:hidden"><div class="t" style="left:0;top:2px;font-size:11px;letter-spacing:-0.2px">No objects selected. Click, Shift+click</div></div>
<div class="a" style="left:791px;top:599px;width:1px;height:24px;background:#808080;box-shadow:1px 0 #fff"></div>
<div class="t" style="left:795px;top:600px;font-size:11px">X:</div>
<div class="t" style="left:795px;top:613px;font-size:11px">Y:</div>
<div class="t" style="left:821px;top:599px;font-size:11px;font-family:'Liberation Mono',monospace">32.86</div>
<div class="t" style="left:821px;top:612px;font-size:11px;font-family:'Liberation Mono',monospace">69.55</div>
<div class="t" style="left:864px;top:605px;font-size:11px">Z:</div>
<div class="a" style="left:876px;top:601px;width:46px;height:20px;background:#fff;border-top:1px solid #808080;border-left:1px solid #808080;border-right:1px solid #fff;border-bottom:1px solid #fff;box-shadow:inset 1px 1px #404040"></div>
<div class="t" style="left:883px;top:605px;font-size:11px">140%</div>
<div class="a" style="left:921px;top:601px;width:12px;height:10px;background:#d4d0c8;border-top:1px solid #fff;border-left:1px solid #fff;border-right:1px solid #404040;border-bottom:1px solid #404040;box-shadow:inset -1px -1px #808080"></div>
<svg class="a" style="left:924px;top:604px" width="6" height="4"><path d="M0 3h6L3 0z" fill="#000"/></svg><svg class="a" style="left:924px;top:614px" width="6" height="4"><path d="M0 0h6L3 3z" fill="#000"/></svg>
<svg class="a" style="left:940px;top:608px" width="13" height="13"><path d="M12 1L1 12M12 5L5 12M12 9L9 12" stroke="#808080" stroke-width="1"/><path d="M12 2L2 12M12 6L6 12M12 10L10 12" stroke="#fff" stroke-width="1"/></svg>
<!--ICONS--><svg class="a" style="left:0;top:0" width="977" height="642" viewBox="0 0 977 642">
<defs>
<pattern id="dth" width="2" height="2" patternUnits="userSpaceOnUse"><rect width="1" height="1" fill="#222"/><rect x="1" y="1" width="1" height="1" fill="#222"/></pattern>
<pattern id="dthl" width="2" height="2" patternUnits="userSpaceOnUse"><rect width="1" height="1" fill="#666"/><rect x="1" y="1" width="1" height="1" fill="#666"/></pattern>
<linearGradient id="gw" x1="0" y1="0" x2="1" y2="1"><stop offset="0" stop-color="#fff"/><stop offset="1" stop-color="#d8d8d8"/></linearGradient>
<linearGradient id="gwave" x1="0" y1="0" x2="0" y2="1"><stop offset="0" stop-color="#d4d0c8"/><stop offset=".5" stop-color="#d4d0c8"/><stop offset=".52" stop-color="#6a6a6a"/><stop offset="1" stop-color="#e8e8e8"/></linearGradient>
<linearGradient id="grect" x1="0" y1="0" x2="1" y2="1"><stop offset="0" stop-color="#f0f6fc"/><stop offset="1" stop-color="#8cb0d0"/></linearGradient>
<radialGradient id="gcirc" cx=".35" cy=".3" r=".8"><stop offset="0" stop-color="#fff"/><stop offset="1" stop-color="#f88ca0"/></radialGradient>
<linearGradient id="gmag" x1="0" y1="0" x2="1" y2="1"><stop offset="0" stop-color="#fff"/><stop offset="1" stop-color="#a8c8f0"/></linearGradient>
<linearGradient id="gstar" x1="0" y1="0" x2="1" y2="1"><stop offset="0" stop-color="#fffce0"/><stop offset="1" stop-color="#f0d850"/></linearGradient>
<linearGradient id="gpen" x1="0" y1="0" x2="1" y2="1"><stop offset="0" stop-color="#d0e8f8"/><stop offset="1" stop-color="#2a70b0"/></linearGradient>
<linearGradient id="gpcl" x1="0" y1="0" x2="1" y2="0"><stop offset="0" stop-color="#ffe040"/><stop offset="1" stop-color="#f08000"/></linearGradient>
</defs>
<path d="M355 161L355 178 359 174.5 362 181 364.5 180 361.5 173.5 366.5 173.5z" fill="#000"/>
<path d="M351 207C351 200 353 196 355 193M355 193C359 190 363 189 369 189" fill="none" stroke="#666" stroke-width="1"/>
<rect x="351.5" y="190.5" width="6" height="6" fill="#8080e0" stroke="#1818f0" stroke-width="1.4"/>
<rect x="367.5" y="187.5" width="4" height="4" fill="#b0b0f0" stroke="#5050ff"/>
<rect x="348.5" y="206.5" width="4" height="4" fill="#b0b0f0" stroke="#5050ff"/>
<path d="M356 195L369.5 204 363 209.5z" fill="#000" stroke="#fff" stroke-width=".6"/>
<path d="M349 240V230C353 230 354 226 356 222 358 218 363 217 366 219 369 221 368 225 365 225 363 225 363 223 364 222 363 224 365 230 370 230V240Z" fill="url(#gwave)"/>
<path d="M349 230C353 230 354 226 356 222 358 218 363 217 366 219 369 221 368 225 365 225 363 225 363 223 364 222 363 224 365 230 370 230" fill="none" stroke="#111" stroke-width="1.4"/>
<path d="M349.5 231.5C354 231 355.5 227 357.5 223.5 359.5 219.5 363 219 365 220.5M364.5 226.5C364.5 228 366.5 231.5 370 231.5" fill="none" stroke="#fff" stroke-width=".8"/>
<path d="M362 261L370 269" stroke="#f0a000" stroke-width="3.4" stroke-linecap="round"/>
<path d="M361.5 260.5L363.5 262.5" stroke="#666" stroke-width="2.5"/>
<circle cx="356" cy="254.5" r="7" fill="url(#gmag)" stroke="#222" stroke-width="1.3"/>
<g transform="rotate(-30 358 288.5)"><rect x="353" y="278" width="10" height="21" fill="#f8d8c8" stroke="#111" stroke-width="1.3"/><path d="M354 281h3M354 284h2M354 287h3M354 290h2M354 293h3M354 296h2" stroke="#333" stroke-width=".8"/></g>
<rect x="350.5" y="309.5" width="19" height="19" fill="url(#grect)" stroke="#000" stroke-width="1.3"/>
<path d="M351 341L362 337.5 369.5 344 368 356 358 360 351 354z" fill="#8080c8" stroke="#333" stroke-width="1"/>
<path d="M362 337.5L369.5 344 368 356 362 349z" fill="#d8d8fc"/>
<path d="M351 354L362 349 368 356 358 360z" fill="#4040a0"/>
<path d="M351 341L362 337.5 369.5 344 368 356 358 360 351 354z" fill="none" stroke="#333" stroke-width="1"/>
<circle cx="360" cy="379" r="9.5" fill="url(#gcirc)" stroke="#111" stroke-width="1.2"/>
<path d="M357 398.5L364.5 403 363 413 353 413.5 349.5 405z" fill="url(#gstar)" stroke="#111" stroke-width="1.1"/>
<path d="M363.5 403.5L366 409 371.5 409.5 367.5 413 369 419.5 363.5 416 358 419 359.5 413 355 409.5 361 409z" fill="url(#gstar)" stroke="#111" stroke-width="1.1"/>
<path d="M359.38 438.93 L359.41 438.91 L359.45 438.89 L359.49 438.87 L359.53 438.86 L359.58 438.85 L359.63 438.85 L359.67 438.84 L359.72 438.84 L359.77 438.85 L359.82 438.86 L359.87 438.87 L359.92 438.89 L359.97 438.91 L360.03 438.94 L360.07 438.97 L360.12 439.01 L360.17 439.04 L360.21 439.09 L360.26 439.13 L360.30 439.19 L360.34 439.24 L360.37 439.30 L360.40 439.36 L360.43 439.43 L360.46 439.50 L360.48 439.57 L360.50 439.64 L360.51 439.72 L360.52 439.80 L360.52 439.88 L360.52 439.96 L360.52 440.05 L360.51 440.13 L360.49 440.22 L360.47 440.31 L360.44 440.39 L360.41 440.48 L360.37 440.57 L360.33 440.65 L360.28 440.74 L360.22 440.82 L360.16 440.90 L360.09 440.98 L360.02 441.06 L359.94 441.13 L359.86 441.20 L359.77 441.27 L359.68 441.34 L359.58 441.39 L359.48 441.45 L359.37 441.50 L359.26 441.54 L359.15 441.58 L359.03 441.62 L358.91 441.64 L358.78 441.67 L358.65 441.68 L358.52 441.69 L358.39 441.69 L358.26 441.68 L358.12 441.67 L357.99 441.65 L357.85 441.62 L357.71 441.59 L357.58 441.54 L357.44 441.49 L357.31 441.43 L357.17 441.37 L357.04 441.29 L356.91 441.21 L356.79 441.12 L356.67 441.02 L356.55 440.92 L356.43 440.81 L356.32 440.69 L356.22 440.56 L356.12 440.43 L356.03 440.29 L355.94 440.15 L355.86 440.00 L355.79 439.84 L355.72 439.68 L355.66 439.51 L355.61 439.34 L355.57 439.17 L355.54 438.99 L355.51 438.81 L355.50 438.62 L355.49 438.44 L355.50 438.25 L355.51 438.06 L355.53 437.86 L355.57 437.67 L355.61 437.48 L355.66 437.29 L355.73 437.10 L355.80 436.91 L355.89 436.73 L355.98 436.54 L356.08 436.36 L356.20 436.19 L356.32 436.02 L356.46 435.85 L356.60 435.69 L356.75 435.53 L356.91 435.39 L357.08 435.25 L357.26 435.11 L357.45 434.99 L357.64 434.87 L357.84 434.76 L358.05 434.66 L358.26 434.57 L358.49 434.50 L358.71 434.43 L358.94 434.37 L359.18 434.32 L359.42 434.29 L359.66 434.27 L359.90 434.26 L360.15 434.26 L360.40 434.27 L360.65 434.30 L360.90 434.34 L361.15 434.39 L361.39 434.46 L361.64 434.53 L361.88 434.63 L362.12 434.73 L362.36 434.84 L362.59 434.97 L362.82 435.11 L363.04 435.27 L363.26 435.43 L363.47 435.61 L363.67 435.80 L363.86 436.00 L364.04 436.21 L364.22 436.43 L364.38 436.66 L364.53 436.90 L364.68 437.15 L364.81 437.40 L364.92 437.67 L365.03 437.94 L365.12 438.22 L365.20 438.50 L365.27 438.79 L365.32 439.09 L365.36 439.39 L365.38 439.69 L365.39 439.99 L365.38 440.30 L365.36 440.61 L365.32 440.92 L365.26 441.23 L365.19 441.53 L365.11 441.84 L365.01 442.14 L364.89 442.44 L364.76 442.73 L364.62 443.02 L364.45 443.30 L364.28 443.58 L364.09 443.85 L363.88 444.11 L363.66 444.36 L363.43 444.60 L363.19 444.83 L362.93 445.05 L362.66 445.26 L362.38 445.46 L362.08 445.64 L361.78 445.81 L361.47 445.96 L361.15 446.10 L360.82 446.23 L360.48 446.34 L360.14 446.43 L359.79 446.50 L359.43 446.56 L359.07 446.60 L358.71 446.63 L358.35 446.63 L357.98 446.62 L357.61 446.59 L357.24 446.54 L356.88 446.48 L356.51 446.39 L356.15 446.29 L355.79 446.17 L355.44 446.03 L355.09 445.87 L354.75 445.69 L354.41 445.50 L354.09 445.29 L353.77 445.06 L353.47 444.82 L353.17 444.56 L352.89 444.28 L352.61 443.99 L352.36 443.69 L352.11 443.37 L351.88 443.04 L351.67 442.69 L351.47 442.34 L351.29 441.97 L351.13 441.60 L350.99 441.21 L350.86 440.81 L350.75 440.41 L350.66 440.00 L350.60 439.59 L350.55 439.17 L350.52 438.75 L350.51 438.32 L350.53 437.89 L350.56 437.47 L350.62 437.04 L350.70 436.61 L350.80 436.19 L350.92 435.77 L351.06 435.35 L351.22 434.94 L351.41 434.54 L351.61 434.15 L351.83 433.76 L352.08 433.38 L352.34 433.02 L352.62 432.66 L352.92 432.32 L353.24 431.99 L353.57 431.68 L353.92 431.38 L354.29 431.10 L354.67 430.84 L355.06 430.59 L355.47 430.37 L355.89 430.16 L356.33 429.97 L356.77 429.81 L357.22 429.66 L357.68 429.54 L358.15 429.44 L358.62 429.36 L359.10 429.30 L359.58 429.27 L360.07 429.26 L360.56 429.28 L361.05 429.32 L361.53 429.38 L362.02 429.47 L362.50 429.58 L362.98 429.72 L363.45 429.88 L363.92 430.06 L364.38 430.27 L364.83 430.50 L365.27 430.75 L365.70 431.02 L366.11 431.32 L366.51 431.64 L366.90 431.98 L367.27 432.33 L367.63 432.71 L367.97 433.11 L368.29 433.52 L368.58 433.95 L368.86 434.39 L369.12 434.85 L369.36 435.33 L369.57 435.82 L369.76 436.31 L369.93 436.82 L370.07 437.34 L370.18 437.87 L370.28 438.40 L370.34 438.94 L370.38 439.48 L370.39 440.03 L370.38 440.58 L370.33 441.12 L370.27 441.67 L370.17 442.22 L370.05 442.76 L369.90 443.30 L369.72 443.83 L369.52 444.35 L369.29 444.87 L369.03 445.37 L368.75 445.87 L368.45 446.35 L368.12 446.81 L367.77 447.27 L367.39 447.70 L366.99 448.12 L366.58 448.52 L366.14 448.90 L365.68 449.26 L365.20 449.59" fill="none" stroke="#111" stroke-width="1.2"/>
<path d="M349 458.5H354C355 458.5 355 460 354.5 461L350.5 468C352.5 466 356 466 356 470 356 476 358 480 362 480 367 480 371 478 372 474" fill="none" stroke="#222" stroke-width="1.1"/>
<path d="M366.5 456.5L372.5 461 366 474.5 360.5 471z" fill="url(#gpcl)" stroke="#222" stroke-width=".9"/>
<path d="M360.5 471L366 474.5 360 481z" fill="#fff" stroke="#222" stroke-width=".9"/>
<path d="M360 481L361.5 477.5 362.8 478.5z" fill="#000" stroke="#000" stroke-width="1"/>
<path d="M350 488h10M350 488c4 4 8 10 8 15 0 3-3 7-6 7" fill="none" stroke="#222" stroke-width="1"/>
<path d="M354 510h5" stroke="#222" stroke-width="1"/>
<rect x="349.5" y="507.5" width="4.5" height="4.5" fill="#fff" stroke="#111" stroke-width="1"/>
<rect x="359.5" y="508.5" width="2.5" height="2.5" fill="#fff" stroke="#111" stroke-width=".8"/>
<path d="M364.5 488L372 492.5 368.5 499 362 495z" fill="url(#gpen)" stroke="#222" stroke-width=".8"/>
<path d="M362 495L368.5 499 367 502 361 498z" fill="#f0c040" stroke="#222" stroke-width=".7"/>
<path d="M361.5 498.5L360 508M366.5 501.5L361 509" stroke="#333" stroke-width="1"/>
<path d="M352.5 128.5h9l4 4v12h-13z" fill="#fff" stroke="#888"/><path d="M355 132.5h5v1.5h3v9h-8z" fill="#3a6ac8"/><path d="M356 135.5h6M356 138h6M356 140.5h6" stroke="#fff" stroke-width=".9"/>
<rect x="379.5" y="128.5" width="15" height="15" fill="none" stroke="#000" stroke-dasharray="2 1"/>
<path d="M382 132h9l2 2-2 1h-9l-1-1.5zM382 135.5h9l2 2-2 1h-9l-1-1.5zM382 139h9l2 2-2 1h-9l-1-1.5z" fill="#eee" stroke="#555" stroke-width=".7"/>
<rect x="407.5" y="128.5" width="15" height="15" fill="none" stroke="#a01818" stroke-dasharray="1.2 1.8"/>
<circle cx="416" cy="134" r="4.5" fill="url(#dthl)" stroke="#555" stroke-width=".6"/><path d="M410 142l2-4 4 2 4-2v4z" fill="#d8c890" stroke="#444" stroke-width=".6"/>
<path d="M455.5 128.5L461 138 455 141z" fill="url(#dth)"/><path d="M447 142L462 135.5 462.5 142 455 143z" fill="#e8dcb0"/><path d="M447 142L462 135.5 462.5 142 455 143z" fill="url(#dth)" opacity=".5"/><path d="M455 142.5h7.5v2h-7.5z" fill="url(#dth)"/><path d="M453 130.5h-3.5v5" fill="none" stroke="#111" stroke-dasharray="1 1"/><path d="M447.5 135.5h4l-2 2.5z" fill="#111"/>
<path d="M482.5 128.5L476 137 482 140z" fill="url(#dth)"/><path d="M475 136L487 142 482 143.5 475 143z" fill="#c8d0e0"/><path d="M475 136L487 142 482 143.5 475 143z" fill="url(#dth)" opacity=".5"/><path d="M476 142.5h7v2h-7z" fill="url(#dth)"/><path d="M485 130.5h3.5v5" fill="none" stroke="#111" stroke-dasharray="1 1"/><path d="M486.5 135.5h4l-2 2.5z" fill="#111"/>
<path d="M508.5 129L503 143h5.5z" fill="url(#dth)"/><path d="M512.5 129L518 143h-5.5z" fill="#e0d0a0"/><path d="M512.5 129L518 143h-5.5z" fill="url(#dth)" opacity=".6"/><path d="M510.5 129v14" stroke="#111" stroke-dasharray="1 1.2"/>
<path d="M532 134.5L546.5 128v6.5z" fill="#c0cce0"/><path d="M532 134.5L546.5 128v6.5z" fill="url(#dth)" opacity=".6"/><path d="M532 136.5L546.5 143v-6.5z" fill="url(#dth)"/><path d="M532 135.5h15" stroke="#111" stroke-dasharray="1.2 1"/>
<rect x="580" y="128" width="8" height="2" fill="url(#dth)"/>
<rect x="580" y="131" width="8" height="2" fill="url(#dth)"/>
<rect x="580" y="134" width="8" height="2" fill="url(#dth)"/>
<rect x="580" y="137" width="8" height="2" fill="url(#dth)"/>
<path d="M574.5 128v11" stroke="#111" stroke-dasharray="1 1"/><path d="M572 137.5h5l-2.5 3z" fill="#111"/>
<rect x="571" y="141" width="17" height="3" fill="#e0d8b8"/><rect x="571" y="141" width="17" height="3" fill="url(#dth)"/>
<rect x="605" y="128" width="10" height="2" fill="url(#dth)"/>
<rect x="605" y="131" width="10" height="2" fill="url(#dth)"/>
<path d="M601.5 131v3" stroke="#111"/><path d="M599.5 133.5h4l-2 2.5z" fill="#111"/>
<rect x="599" y="137" width="16" height="3" fill="#e0d8b8"/><rect x="599" y="137" width="16" height="3" fill="url(#dth)"/>
<rect x="605" y="142" width="10" height="2" fill="url(#dth)"/>
<rect x="627" y="128" width="8" height="2" fill="url(#dth)"/>
<rect x="627" y="131" width="16" height="3" fill="#c8d4e8"/><rect x="627" y="131" width="16" height="3" fill="url(#dth)"/>
<rect x="627" y="136" width="9" height="2" fill="url(#dth)"/>
<rect x="627" y="139" width="9" height="2" fill="url(#dth)"/>
<rect x="627" y="142" width="8" height="2" fill="url(#dth)"/>
<path d="M640.5 140v-3" stroke="#111"/><path d="M638.5 138h4l-2-2.5z" fill="#111"/>
<rect x="655" y="128" width="17" height="3" fill="#c8d4e8"/><rect x="655" y="128" width="17" height="3" fill="url(#dth)"/>
<rect x="655" y="133" width="8" height="2" fill="url(#dth)"/>
<rect x="655" y="136" width="8" height="2" fill="url(#dth)"/>
<rect x="655" y="139" width="8" height="2" fill="url(#dth)"/>
<rect x="655" y="142" width="8" height="2" fill="url(#dth)"/>
<path d="M669.5 144v-10" stroke="#111"/><path d="M667 134.5h5l-2.5-3z" fill="#111"/>
<path d="M898.5 160.5h9l4 4v11.5h-13z" fill="url(#gw)" stroke="#777"/><path d="M907.5 160.5v4h4" fill="#fff" stroke="#777"/>
<path d="M897.5 190.5h5l1 2h8.5v10h-14.5z" fill="#c8cca8" stroke="#7c8060"/><path d="M898 197h15l-1 5.5h-14z" fill="#e0e4c4" stroke="#7c8060" stroke-width=".8"/>
<rect x="897.5" y="215.5" width="15" height="16" rx="1" fill="#2a5cb8" stroke="#1a3c90"/><rect x="899" y="216" width="12" height="3" fill="#e02020"/><rect x="899" y="219" width="12" height="5" fill="#f4f4f4"/><rect x="901" y="225" width="8" height="6" fill="#e8e8e8"/><rect x="902" y="226" width="2" height="4" fill="#223"/>
<path d="M901.5 244.5h8v6h-8z" fill="#f4f4f4" stroke="#555"/><path d="M897.5 250.5h15v9h-15z" fill="#e4e4e4" stroke="#333"/><path d="M899 255h12" stroke="#333"/><path d="M903 247h4M903 249h4" stroke="#888" stroke-width=".7"/>
<path d="M900.5 284.5h7l4 4v11h-11z" fill="url(#gw)" stroke="#111"/><path d="M897 292h9M903 289.5l3 2.5-3 2.5z" stroke="#000" fill="#000"/>
<path d="M898.5 312.5h7l4 4v11h-11z" fill="url(#gw)" stroke="#111"/><path d="M904 320h9M910 317.5l3 2.5-3 2.5z" stroke="#000" fill="#000"/>
<path d="M898.5 352.5h8l4 4v11h-12z" fill="#ecebe8" stroke="#8a8a8a" stroke-dasharray="1 1"/><path d="M898.5 352.5h8l4 4v11h-12z" fill="url(#dthl)" opacity=".25"/><path d="M902 359l5 5M907 359l-5 5" stroke="#c86060" stroke-width=".9"/>
<path d="M898.5 380.5h8l4 4v11h-12z" fill="#ecebe8" stroke="#8a8a8a" stroke-dasharray="1 1"/><path d="M898.5 380.5h8l4 4v11h-12z" fill="url(#dthl)" opacity=".25"/><path d="M902 387l5 5M907 387l-5 5" stroke="#c86060" stroke-width=".9"/>
<path d="M897.5 420.5h8v10h-8z" fill="#eee" stroke="#aaa"/><path d="M901.5 423.5h8l3 3v8.5h-11z" fill="#f8f8f8" stroke="#666"/><path d="M903.5 427h6M903.5 429.5h6M903.5 432h6" stroke="#888" stroke-width=".7"/>
<path d="M899 448l7 9M911 448l-7 9" stroke="#8c8c8c" stroke-width="1.5"/><rect x="897.5" y="456.5" width="6" height="6" rx="1.5" fill="#e0a030" stroke="#a06010"/><rect x="906.5" y="456.5" width="6" height="6" rx="1.5" fill="#e0a030" stroke="#a06010"/><circle cx="900.5" cy="459.5" r="1.2" fill="#fff"/><circle cx="909.5" cy="459.5" r="1.2" fill="#fff"/>
<rect x="897.5" y="477.5" width="15" height="15" rx="1.5" fill="#c87a20" stroke="#8a5010"/><path d="M900.5 480.5h9v10h-9z" fill="#fafafa" stroke="#999" stroke-width=".7"/><rect x="902" y="476" width="6" height="3" fill="#ddd" stroke="#777" stroke-width=".6"/><path d="M902 484h6M902 486.5h6" stroke="#888" stroke-width=".7"/>
<path d="M934.5 165.5L939.5 170.5" stroke="#000" stroke-width="1.2"/><path d="M941 172l-4.5 -1 3.5 -3.5z" fill="#000"/>
<rect x="931" y="162" width="4" height="4" transform="rotate(45 933 164)" fill="#a8a8f0" stroke="#2828ff" stroke-width="1.1"/>
<rect x="941" y="172" width="4" height="4" transform="rotate(45 943 174)" fill="#a0a0d8" stroke="#208a20" stroke-width="1.1"/>
<path d="M933.5 203.5L938.5 209.5" stroke="#000" stroke-width="1.2"/><path d="M940 211l-4.5 -1 3.5 -3.5z" fill="#000"/>
<rect x="930" y="200" width="4" height="4" transform="rotate(45 932 202)" fill="#a8a8f0" stroke="#2828ff" stroke-width="1.1"/>
<rect x="940" y="211" width="4" height="4" transform="rotate(45 942 213)" fill="#a0a0d8" stroke="#208a20" stroke-width="1.1"/>
<path d="M934.5 357.5L939.5 362.5" stroke="#000" stroke-width="1.2"/><path d="M941 364l-4.5 -1 3.5 -3.5z" fill="#000"/>
<rect x="931" y="354" width="4" height="4" transform="rotate(45 933 356)" fill="#a8a8f0" stroke="#2828ff" stroke-width="1.1"/>
<rect x="941" y="364" width="4" height="4" transform="rotate(45 943 366)" fill="#a0a0d8" stroke="#208a20" stroke-width="1.1"/>
<path d="M929.5 241.5h14v-14" fill="none" stroke="#4a8a4a" stroke-dasharray="1.5 1.5"/>
<path d="M929.5 270.5h14v-14" fill="none" stroke="#333" stroke-dasharray="1.5 1.5"/><rect x="941" y="268" width="4" height="4" transform="rotate(45 943 270)" fill="#8c8" stroke="#393"/>
<path d="M930.5 296.5h12v-12" fill="none" stroke="#333" stroke-dasharray="1.5 1.5"/><rect x="941" y="286" width="3.5" height="3.5" transform="rotate(45 942.7 287.7)" fill="#8c8" stroke="#393"/>
<path d="M929.5 324.5h13v-11" fill="none" stroke="#333" stroke-dasharray="1.5 1.5"/><rect x="931.5" y="316" width="3.5" height="3.5" transform="rotate(45 933.2 317.7)" fill="#8c8" stroke="#393"/>
<path d="M929 381c6 1 12 5 14 9 1 2-2 4-5 4" fill="none" stroke="#2a9a2a" stroke-width="1.5"/>
<path d="M929 422L945 409" stroke="#333" stroke-width="1"/><path d="M930 414L944 419" stroke="#333" stroke-width="1"/><circle cx="937" cy="416" r="2.2" fill="#4040c0" stroke="#20a020" stroke-width="1.2"/>
<path d="M929 437c6 0 12 4 10 11M945 443c-2 4-4 5-6 5" fill="none" stroke="#444" stroke-width="1"/><circle cx="937" cy="448" r="2.2" fill="#4040c0" stroke="#20a020" stroke-width="1.2"/>
<path d="M929 465c3 0 7 0 8 2M945 470c-1 5-4 7-8 8" fill="none" stroke="#444" stroke-width="1"/><rect x="935" y="464" width="4" height="4" fill="#4040c0" stroke="#20a020" stroke-width="1"/>
<path d="M929 507L945 492" stroke="#333" stroke-width=".8"/><path d="M931 501l2 6M934 498l2 6M940 494l2 6M943 491l2 6" stroke="#d02020" stroke-width="1.2"/><circle cx="937" cy="499" r="2.2" fill="#4040c0" stroke="#20a020" stroke-width="1.2"/>
<circle cx="872" cy="159" r="3.5" fill="#eee" stroke="#888" stroke-width="1.2"/><path d="M874.5 161.5l3 3" stroke="#888" stroke-width="1.5"/>
<path d="M870 550l7 4.5-7 4.5z" fill="url(#dthl)" stroke="#6a6" stroke-width=".8"/><path d="M871 555l3 1.5-3 1.5z" fill="#a5c"/>
<path d="M539.5 611.5C541.5 608.5 547 608.5 548.5 611.5 547 614 541.5 614 539.5 611.5z" fill="#ddd" stroke="#111" stroke-width="1.1"/><circle cx="544" cy="611.5" r="1.7" fill="#000"/><path d="M540 609l1 1.3M542 607.5l.5 1.5M544 607v1.5M546 607.5l-.5 1.5M548 609l-1 1.3" stroke="#111" stroke-width=".9"/>
<rect x="556" y="610.5" width="5.5" height="5" fill="#f0e080" stroke="#333" stroke-width=".9"/><path d="M559 610.5v-2a1.8 1.8 0 0 1 3.6 0v1" fill="none" stroke="#555" stroke-width=".9"/>
</svg><!--ICONS_END-->
<!--INK_END-->
</body></html>
